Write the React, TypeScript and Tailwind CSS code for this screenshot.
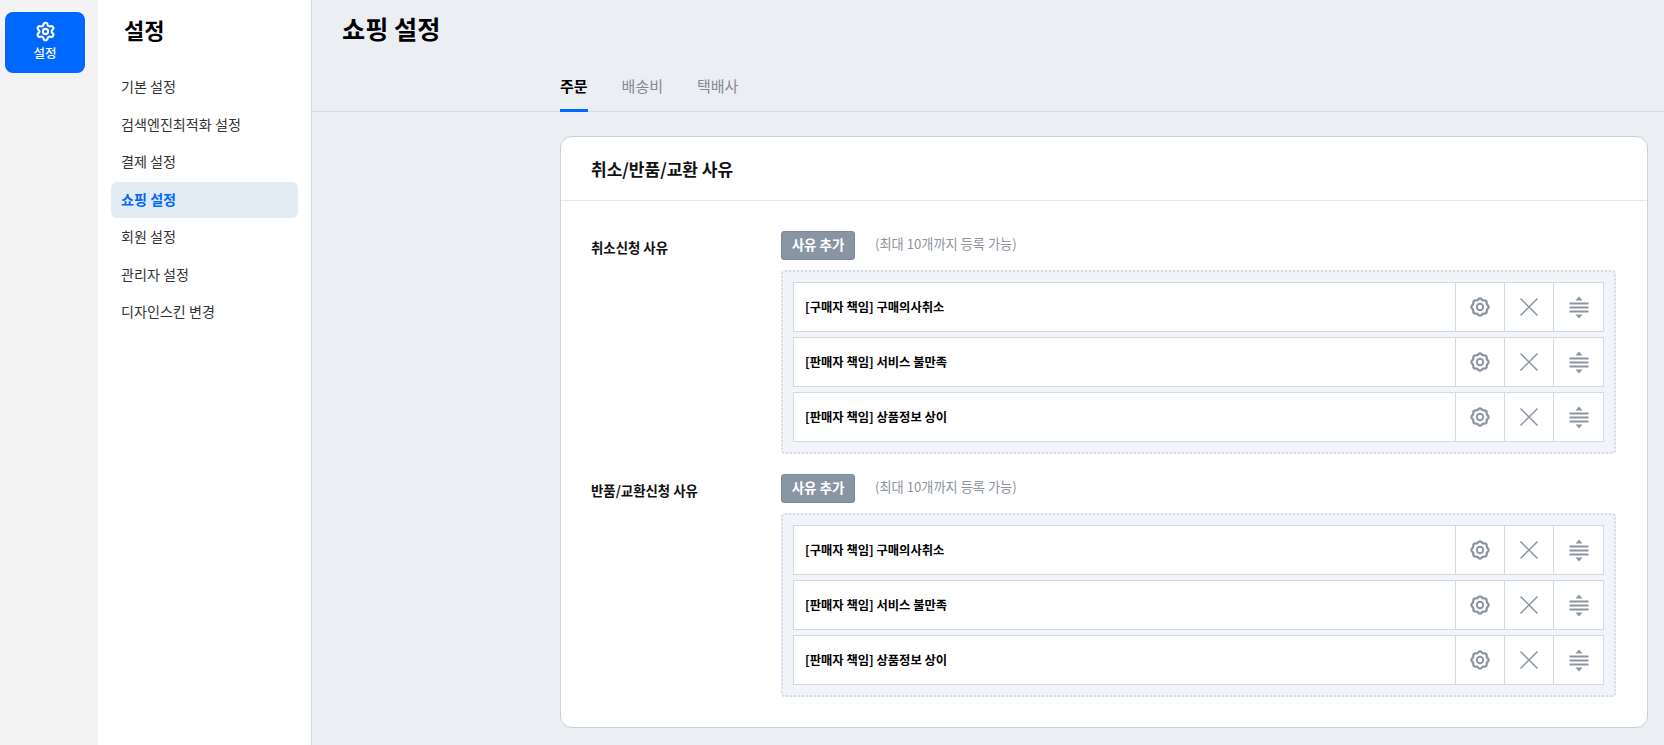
import { Settings } from "lucide-react";

const MENU = ["기본 설정", "검색엔진최적화 설정", "결제 설정", "쇼핑 설정", "회원 설정", "관리자 설정", "디자인스킨 변경"];
const REASONS = ["[구매자 책임] 구매의사취소", "[판매자 책임] 서비스 불만족", "[판매자 책임] 상품정보 상이"];

function gearPath() {
  const points: string[] = [];
  for (let i = 0; i < 64; i++) {
    const angle = (i / 64) * Math.PI * 2;
    const radius = 8 + 0.6 * Math.cos(angle * 8);
    points.push(`${(10 + radius * Math.cos(angle)).toFixed(2)} ${(10 + radius * Math.sin(angle)).toFixed(2)}`);
  }
  return `M${points.join("L")}Z`;
}

function GearIcon() {
  return (
    <svg width="20" height="20" viewBox="0 0 20 20" fill="none" stroke="#8b95a3" strokeWidth="2.3">
      <path d={gearPath()} />
      <circle cx="10" cy="10" r="3.2" strokeWidth="1.9" />
    </svg>
  );
}

function CloseIcon() {
  return (
    <svg width="20" height="20" viewBox="0 0 20 20" fill="none" stroke="#8b95a3" strokeWidth="1.5">
      <path d="M1.5 1.5L18.5 18.5M18.5 1.5L1.5 18.5" />
    </svg>
  );
}

function SortIcon() {
  return (
    <svg width="20" height="23" viewBox="0 0 20 23" fill="#8b95a3">
      <path d="M10 0.5L13.5 4.5H6.5Z" />
      <rect x="0.5" y="6.5" width="19" height="2" />
      <rect x="0.5" y="10.5" width="19" height="2" />
      <rect x="0.5" y="14.5" width="19" height="2" />
      <path d="M10 22.5L13.5 18.5H6.5Z" />
    </svg>
  );
}

function ReasonRow({ label }: { label: string }) {
  return (
    <div className="flex h-[50px] items-stretch border border-[#d3dae2] bg-white">
      <div className="flex flex-1 items-center pl-[11px] text-[12.3px] font-bold text-black">{label}</div>
      <div className="flex w-[49px] items-center justify-center border-l border-[#d3dae2]"><GearIcon /></div>
      <div className="flex w-[49px] items-center justify-center border-l border-[#d3dae2]"><CloseIcon /></div>
      <div className="flex w-[50px] items-center justify-center border-l border-[#d3dae2]"><SortIcon /></div>
    </div>
  );
}

function ReasonGroup({ title }: { title: string }) {
  return (
    <div className="flex">
      <div className="w-[190px] pt-[6px] text-[13.4px] font-bold leading-[20px] text-[#111]">{title}</div>
      <div className="flex-1">
        <div className="flex items-center">
          <button type="button" className="h-[29px] w-[74px] rounded-[3px] border border-[#7d8896] bg-[#8a95a4] pb-[2px] text-[13.5px] font-bold text-white">사유 추가</button>
          <span className="mb-[3px] ml-[20px] text-[13.2px] text-[#8d949c]">(최대 10개까지 등록 가능)</span>
        </div>
        <div className="mt-[10px] flex flex-col gap-[5px] rounded-[4px] border-2 border-dotted border-[#d5dbe3] bg-[#f1f4f8] p-[10px]">
          {REASONS.map((label) => (
            <ReasonRow key={label} label={label} />
          ))}
        </div>
      </div>
    </div>
  );
}

export default function App() {
  return (
    <div className="flex h-[745px] overflow-hidden bg-[#ebeef3] font-['Noto_Sans_CJK_KR','Noto_Sans',sans-serif]">
      <aside className="w-[98px] shrink-0 bg-[#f3f3f3] pl-[5px] pt-[12px]">
        <div className="flex h-[61px] w-[80px] flex-col items-center justify-center rounded-[8px] bg-[#0068ff] pb-[3px] text-white">
          <Settings size={21} strokeWidth={2.4} />
          <span className="mt-[3px] text-[12.5px] font-medium leading-[16px]">설정</span>
        </div>
      </aside>

      <nav className="w-[214px] shrink-0 border-r border-[#d5d9df] bg-white pl-[13px] pr-[13px]">
        <h2 className="pl-[13px] pt-[11px] text-[22px] font-bold leading-[36px] text-black">설정</h2>
        <ul className="mt-[22px] flex flex-col gap-[1.5px]">
          {MENU.map((item) => (
            <li
              key={item}
              className={`flex h-[36px] items-center rounded-[6px] pl-[10px] text-[14.1px] ${
                item === "쇼핑 설정" ? "bg-[#e3ecf5] font-bold text-[#0068ff]" : "text-[#333]"
              }`}
            >
              {item}
            </li>
          ))}
        </ul>
      </nav>

      <main className="flex-1">
        <h1 className="pl-[30px] pt-[10px] pb-[1px] text-[25.2px] font-bold leading-[36px] text-black">쇼핑 설정</h1>
        <div className="flex h-[65px] items-stretch gap-[34px] border-b border-[#d5d9df] pl-[248px]">
          <div className="-mb-px flex items-center border-b-[3px] border-[#0068ff] pt-[17px] text-[15px] font-bold text-black">주문</div>
          <div className="flex items-center pt-[14px] text-[15px] text-[#85898f]">배송비</div>
          <div className="flex items-center pt-[14px] text-[15px] text-[#85898f]">택배사</div>
        </div>
        <section className="ml-[248px] mr-[16px] mt-[24px] rounded-[12px] border border-[#c6d2df] bg-white">
          <h3 className="flex h-[64px] items-center border-b border-[#e3e6ea] pl-[30px] text-[17px] font-bold text-[#111]">취소/반품/교환 사유</h3>
          <div className="flex flex-col gap-[20px] py-[30px] pl-[30px] pr-[31px]">
            <ReasonGroup title="취소신청 사유" />
            <ReasonGroup title="반품/교환신청 사유" />
          </div>
        </section>
      </main>
    </div>
  );
}
